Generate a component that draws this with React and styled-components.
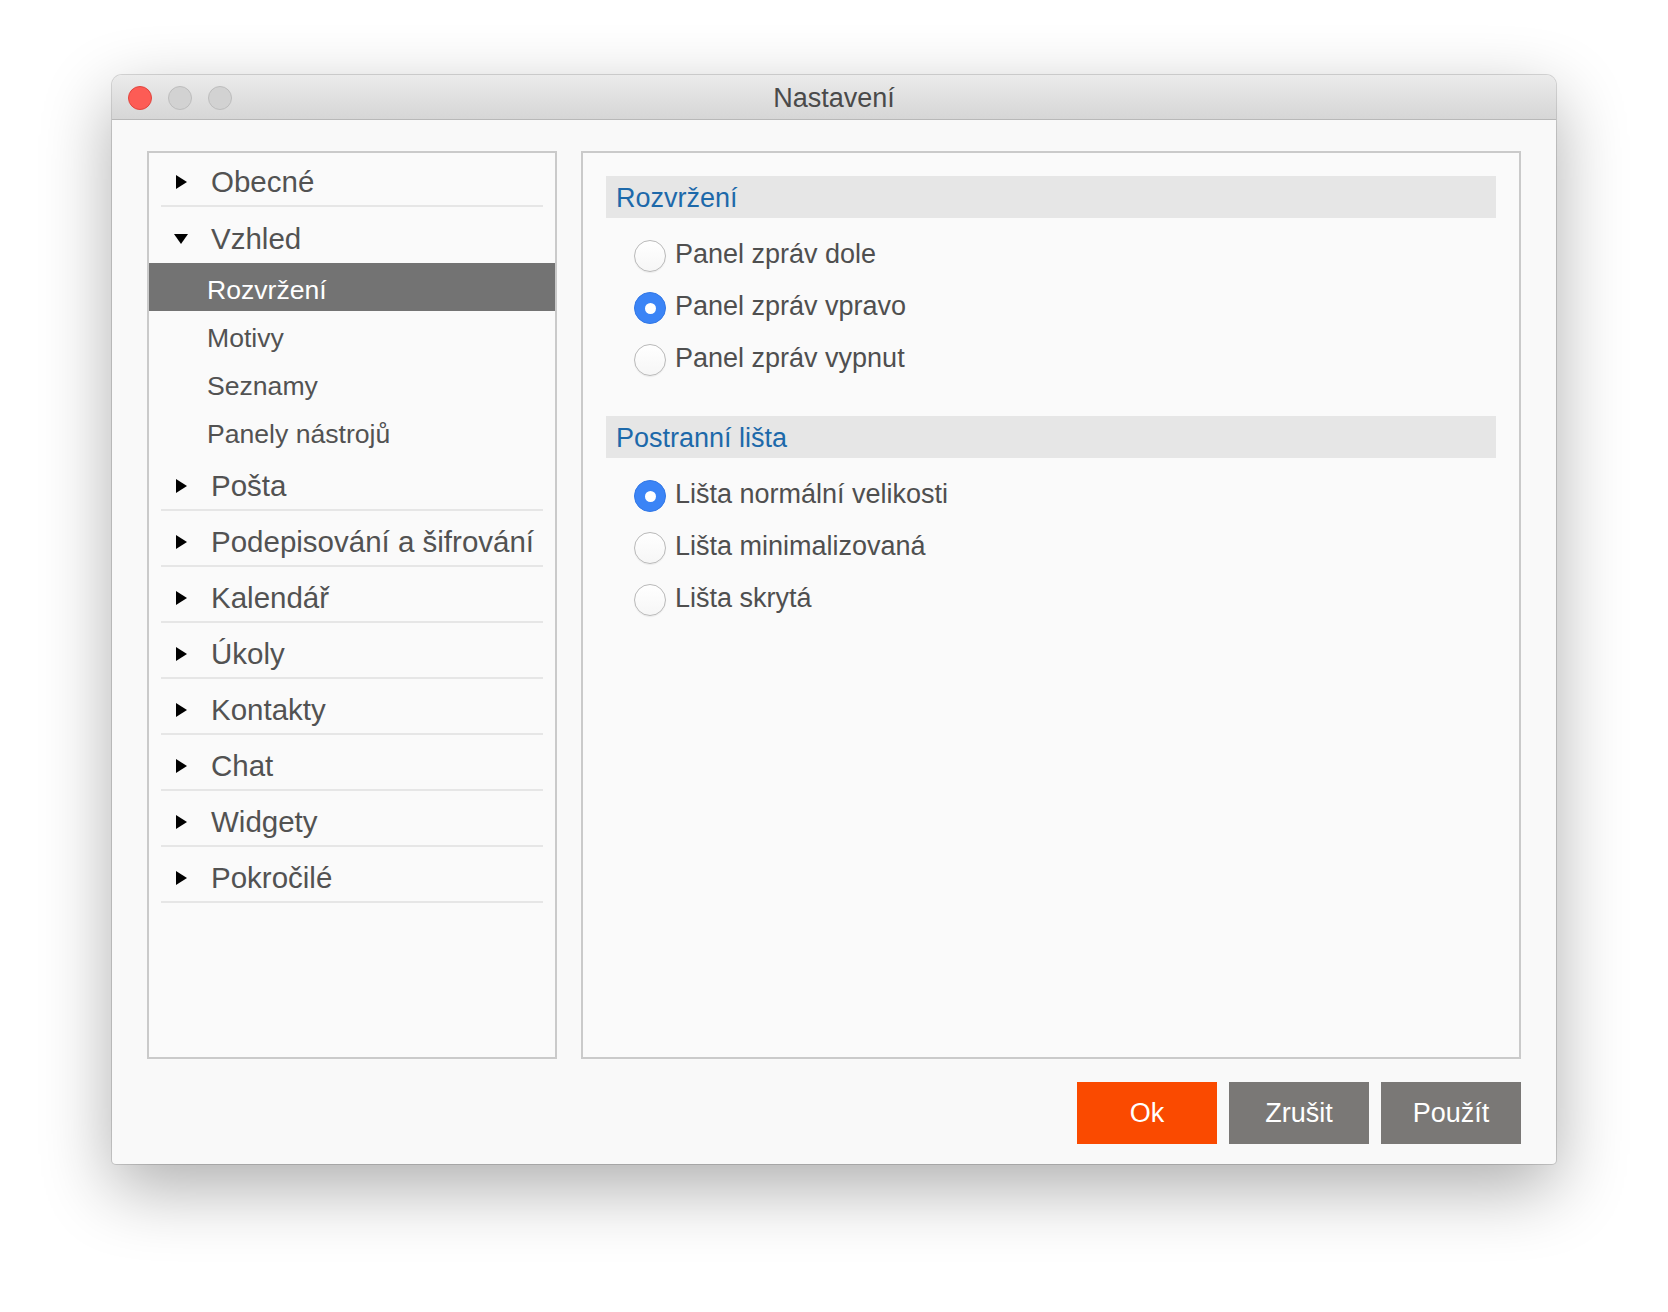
import React, { useState } from 'react'
import styled, { createGlobalStyle } from 'styled-components'

const GlobalStyle = createGlobalStyle`
  html, body {
    margin: 0;
    padding: 0;
    background: #ffffff;
    font-family: "Liberation Sans", Arial, Helvetica, sans-serif;
  }
`

const Page = styled.div`
  width: 1668px;
  height: 1312px;
  padding: 75px 0 0 112px;
  box-sizing: border-box;
`

const Window = styled.div`
  width: 1444px;
  height: 1089px;
  background: #f9f9f9;
  border-radius: 10px 10px 4px 4px;
  box-shadow: 0 24px 70px rgba(0, 0, 0, 0.32), 0 0 0 1px rgba(0, 0, 0, 0.14);
  display: flex;
  flex-direction: column;
  overflow: hidden;
`

const TitleBar = styled.div`
  height: 45px;
  flex: none;
  box-sizing: border-box;
  background: linear-gradient(#ebebeb, #d6d6d6);
  border-bottom: 1px solid #b8b8b8;
  display: flex;
  align-items: center;
  position: relative;
`

const Lights = styled.div`
  display: flex;
  gap: 16px;
  padding-left: 16px;
  padding-top: 2px;
`

const Light = styled.span`
  width: 24px;
  height: 24px;
  border-radius: 50%;
  box-sizing: border-box;
  background: ${({ $red }) => ($red ? '#fd5c55' : '#d2d2d2')};
  border: 1px solid ${({ $red }) => ($red ? '#e1453e' : '#bdbdbd')};
`

const Title = styled.div`
  position: absolute;
  left: 0;
  right: 0;
  top: 0;
  bottom: 0;
  display: flex;
  align-items: center;
  justify-content: center;
  font-size: 27px;
  color: #4a4a4a;
  padding-top: 3px;
  pointer-events: none;
`

const Body = styled.div`
  flex: 1;
  display: flex;
  flex-direction: column;
  padding: 31px 35px 20px 35px;
`

const Main = styled.div`
  display: flex;
  gap: 24px;
  height: 908px;
`

const Sidebar = styled.div`
  width: 410px;
  box-sizing: border-box;
  border: 2px solid #cacaca;
  background: #fafafa;
  display: flex;
  flex-direction: column;
`

const TopRow = styled.div`
  height: ${({ $first }) => ($first ? '54px' : '56px')};
  box-sizing: border-box;
  margin: 0 12px;
  padding-top: ${({ $first }) => ($first ? '6px' : '8px')};
  padding-left: 13px;
  display: flex;
  align-items: center;
  gap: 23px;
  font-size: 29.5px;
  color: #525252;
  border-bottom: ${({ $sep }) => ($sep ? '2px solid #e6e6e6' : 'none')};
`

const Arrow = styled.span`
  width: 14px;
  display: flex;
  justify-content: center;
  align-items: center;
`

const SubRow = styled.div`
  height: 48px;
  box-sizing: border-box;
  padding-top: 6px;
  padding-left: 58px;
  display: flex;
  align-items: center;
  font-size: 26.6px;
  color: ${({ $active }) => ($active ? '#ffffff' : '#525252')};
  background: ${({ $active }) => ($active ? '#737373' : 'transparent')};
`

const Content = styled.div`
  width: 940px;
  box-sizing: border-box;
  border: 2px solid #cacaca;
  background: #fafafa;
  padding: 23px 23px 0 23px;
  display: flex;
  flex-direction: column;
  gap: 30px;
`

const Group = styled.div`
  display: flex;
  flex-direction: column;
`

const GroupHeader = styled.div`
  height: 42px;
  box-sizing: border-box;
  background: #e6e6e6;
  color: #1d69aa;
  font-size: 27px;
  padding: 3px 0 0 10px;
  display: flex;
  align-items: center;
  margin-bottom: 12px;
`

const RadioRow = styled.label`
  height: 52px;
  display: flex;
  align-items: center;
  gap: 9px;
  padding-left: 28px;
  font-size: 27px;
  color: #4f4f4f;
  cursor: default;
`

const RadioMark = styled.span`
  width: 32px;
  height: 32px;
  border-radius: 50%;
  box-sizing: border-box;
  flex: none;
  display: flex;
  align-items: center;
  justify-content: center;
  background: ${({ $on }) => ($on ? '#3b84f6' : 'linear-gradient(#ffffff, #f6f6f6)')};
  border: 1px solid ${({ $on }) => ($on ? '#3177e6' : '#b9b9b9')};
  box-shadow: ${({ $on }) => ($on ? 'none' : '0 1px 1px rgba(0,0,0,0.06)')};

  &::after {
    content: '';
    width: 11px;
    height: 11px;
    border-radius: 50%;
    background: #ffffff;
    display: ${({ $on }) => ($on ? 'block' : 'none')};
  }
`

const RadioText = styled.span`
  padding-bottom: 4px;
`

const Footer = styled.div`
  display: flex;
  justify-content: flex-end;
  gap: 12px;
  margin-top: 23px;
`

const Button = styled.button`
  width: 140px;
  height: 62px;
  border: none;
  padding: 0;
  font-family: inherit;
  font-size: 27px;
  color: #ffffff;
  background: ${({ $primary }) => ($primary ? '#fa4a00' : '#7a7876')};
  display: flex;
  align-items: center;
  justify-content: center;
`

const RightTri = () => (
  <svg width="11" height="14" viewBox="0 0 11 14">
    <polygon points="0,0 11,7 0,14" fill="#000" />
  </svg>
)

const DownTri = () => (
  <svg width="14" height="10" viewBox="0 0 14 10">
    <polygon points="0,0 14,0 7,10" fill="#000" />
  </svg>
)

const tree = [
  { label: 'Obecné' },
  { label: 'Vzhled', open: true, children: ['Rozvržení', 'Motivy', 'Seznamy', 'Panely nástrojů'] },
  { label: 'Pošta' },
  { label: 'Podepisování a šifrování' },
  { label: 'Kalendář' },
  { label: 'Úkoly' },
  { label: 'Kontakty' },
  { label: 'Chat' },
  { label: 'Widgety' },
  { label: 'Pokročilé' },
]

const groups = [
  {
    title: 'Rozvržení',
    name: 'layout',
    options: ['Panel zpráv dole', 'Panel zpráv vpravo', 'Panel zpráv vypnut'],
    initial: 1,
  },
  {
    title: 'Postranní lišta',
    name: 'sidebar',
    options: ['Lišta normální velikosti', 'Lišta minimalizovaná', 'Lišta skrytá'],
    initial: 0,
  },
]

const RadioGroup = ({ group }) => {
  const [value, setValue] = useState(group.initial)
  return (
    <Group>
      <GroupHeader>{group.title}</GroupHeader>
      {group.options.map((opt, i) => (
        <RadioRow key={opt} onClick={() => setValue(i)}>
          <RadioMark $on={value === i} />
          <RadioText>{opt}</RadioText>
        </RadioRow>
      ))}
    </Group>
  )
}

export default function App() {
  const [active, setActive] = useState('Rozvržení')
  return (
    <>
      <GlobalStyle />
      <Page>
        <Window>
          <TitleBar>
            <Lights>
              <Light $red />
              <Light />
              <Light />
            </Lights>
            <Title>Nastavení</Title>
          </TitleBar>
          <Body>
            <Main>
              <Sidebar>
                {tree.map((item, idx) => (
                  <React.Fragment key={item.label}>
                    <TopRow $sep={!item.open} $first={idx === 0}>
                      <Arrow>{item.open ? <DownTri /> : <RightTri />}</Arrow>
                      {item.label}
                    </TopRow>
                    {item.open &&
                      item.children.map((c) => (
                        <SubRow key={c} $active={active === c} onClick={() => setActive(c)}>
                          {c}
                        </SubRow>
                      ))}
                  </React.Fragment>
                ))}
              </Sidebar>
              <Content>
                {groups.map((g) => (
                  <RadioGroup key={g.name} group={g} />
                ))}
              </Content>
            </Main>
            <Footer>
              <Button $primary>Ok</Button>
              <Button>Zrušit</Button>
              <Button>Použít</Button>
            </Footer>
          </Body>
        </Window>
      </Page>
    </>
  )
}
